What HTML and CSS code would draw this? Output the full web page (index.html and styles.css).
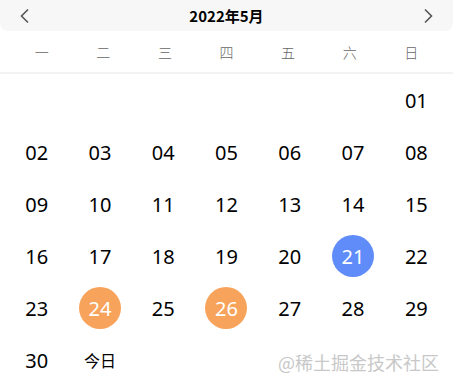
FILE: index.html
```html
<!DOCTYPE html>
<html lang="zh-CN">
<head>
    <meta charset="UTF-8">
    <meta name="viewport" content="width=device-width, initial-scale=1.0">
    <title>日历</title>
    <link rel="stylesheet" href="styles.css">
</head>
<body>

    <div class="calendar">
        <!-- 月份切换 -->
        <div class="cal-header">
            <span class="cal-arrow">
                <svg width="12" height="16" viewBox="0 0 12 16"><path d="M9 1.5 L2.5 8 L9 14.5" fill="none" stroke="#555" stroke-width="1.6"/></svg>
            </span>
            <span class="cal-title">2022年5月</span>
            <span class="cal-arrow">
                <svg width="12" height="16" viewBox="0 0 12 16"><path d="M3 1.5 L9.5 8 L3 14.5" fill="none" stroke="#555" stroke-width="1.6"/></svg>
            </span>
        </div>

        <!-- 星期 -->
        <div class="cal-week">
            <span>一</span><span>二</span><span>三</span><span>四</span><span>五</span><span>六</span><span>日</span>
        </div>

        <!-- 日期 -->
        <div class="cal-days">
            <span></span><span></span><span></span><span></span><span></span><span></span>
            <span class="day">01</span>
            <span class="day">02</span><span class="day">03</span><span class="day">04</span><span class="day">05</span><span class="day">06</span><span class="day">07</span><span class="day">08</span>
            <span class="day">09</span><span class="day">10</span><span class="day">11</span><span class="day">12</span><span class="day">13</span><span class="day">14</span><span class="day">15</span>
            <span class="day">16</span><span class="day">17</span><span class="day">18</span><span class="day">19</span><span class="day">20</span><span class="day day-blue">21</span><span class="day">22</span>
            <span class="day">23</span><span class="day day-orange">24</span><span class="day">25</span><span class="day day-orange">26</span><span class="day">27</span><span class="day">28</span><span class="day">29</span>
            <span class="day">30</span><span class="day day-today">今日</span>
        </div>

        <div class="watermark">@稀土掘金技术社区</div>
    </div>

</body>
</html>
```

FILE: styles.css
```css
/* Calendar */
body {
    margin: 0;
    background: #fff;
    font-family: 'Noto Sans', 'Noto Sans CJK SC', sans-serif;
    color: #000;
}

.calendar {
    position: relative;
    width: 453px;
    height: 389px;
    overflow: hidden;
}

.cal-header {
    height: 31px;
    background-color: #f7f7f7;
    border-radius: 0 0 8px 8px;
    display: flex;
    align-items: center;
    justify-content: space-between;
    padding: 0 19px;
}

.cal-arrow {
    display: flex;
    align-items: center;
    width: 12px;
    height: 16px;
}

.cal-title {
    font-family: 'Noto Sans CJK SC', sans-serif;
    font-size: 15px;
    font-weight: bold;
}

.cal-week {
    display: grid;
    grid-template-columns: repeat(7, 1fr);
    height: 41px;
    padding: 0 11px;
    border-bottom: 2px solid #f2f2f2;
    font-family: 'Noto Sans CJK SC', sans-serif;
    font-size: 14px;
    color: #666;
    font-weight: 300;
}

.cal-week span {
    display: flex;
    align-items: center;
    justify-content: center;
}

.cal-days {
    display: grid;
    grid-template-columns: repeat(7, 1fr);
    grid-auto-rows: 52px;
    padding: 0 5px;
}

.day {
    display: flex;
    align-items: center;
    justify-content: center;
    font-size: 20px;
}

.day-blue,
.day-orange {
    width: 42px;
    height: 42px;
    border-radius: 50%;
    margin: auto;
    color: #fff;
}

.day-blue {
    background-color: #608cf9;
}

.day-orange {
    background-color: #f8a35b;
}

.day-today {
    font-family: 'Noto Sans CJK SC', sans-serif;
    font-size: 16px;
}

.watermark {
    position: absolute;
    right: 14px;
    bottom: 14px;
    font-family: 'Noto Sans CJK SC', sans-serif;
    font-size: 18px;
    color: #c8c8c8;
}
```
